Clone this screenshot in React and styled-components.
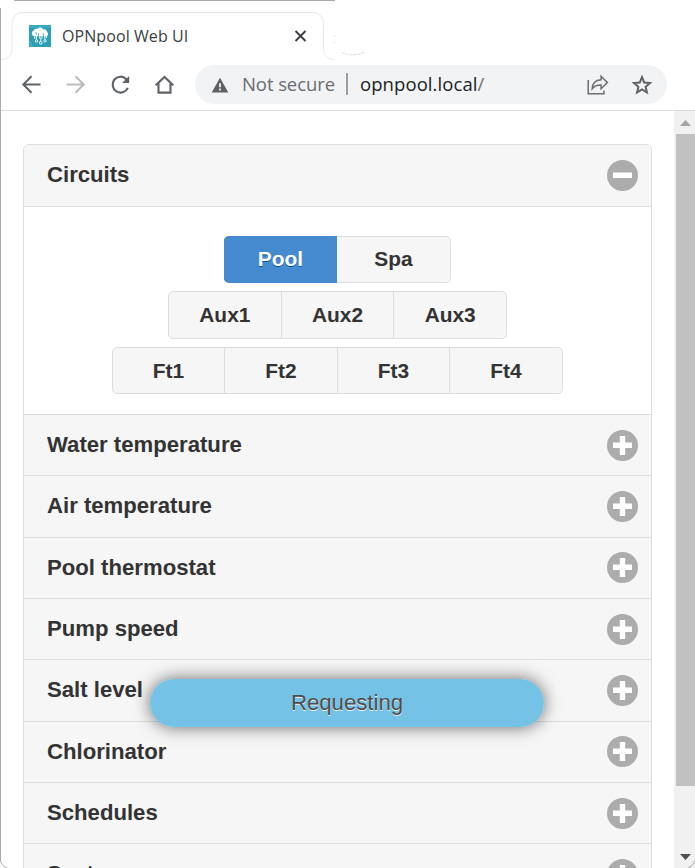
import React from "react";
import styled, { createGlobalStyle } from "styled-components";

const GlobalStyle = createGlobalStyle`
  *, *::before, *::after { box-sizing: border-box; }
  html, body { margin: 0; padding: 0; overflow: hidden; background: #fff; }
`;

const Window = styled.div`
  position: relative;
  width: 695px;
  height: 868px;
  display: flex;
  flex-direction: column;
  overflow: hidden;
  background: #fff;
`;

const WindowEdge = styled.svg`
  position: absolute;
  inset: 0;
  pointer-events: none;
`;

const TabStrip = styled.header`
  height: 61px;
  flex: none;
  display: flex;
  padding: 12px 0 0 12px;
`;

const Tab = styled.div`
  width: 312px;
  height: 48px;
  display: flex;
  align-items: center;
  padding: 0 13px 0 17px;
`;

const TabTitle = styled.span`
  flex: 1;
  margin-left: 11px;
  font: 16px/24px "Open Sans", sans-serif;
  letter-spacing: 0.08px;
  color: #3c4043;
  white-space: nowrap;
`;

const Toolbar = styled.nav`
  height: 50px;
  flex: none;
  display: flex;
  align-items: flex-start;
  padding: 4px 0 0 20px;
  border-bottom: 1px solid #d9dadc;
`;

const NavButtons = styled.div`
  display: flex;
  align-items: center;
  height: 39px;
  width: 175px;
  gap: 20.3px;
`;

const AddressBar = styled.div`
  width: 472px;
  height: 39px;
  border-radius: 20px;
  background: #f1f3f4;
  display: flex;
  align-items: center;
  padding: 0 14px 0 16px;
`;

const AddressText = styled.span`
  font: 18.5px/26px "Open Sans", sans-serif;
  letter-spacing: 0.08px;
  padding-bottom: 1px;
  color: #202124;
  white-space: nowrap;
`;

const SecurityLabel = styled(AddressText)`
  width: 93px;
  margin-left: 13px;
  letter-spacing: -0.08px;
  color: #696c70;
`;

const Slash = styled.span`
  color: #6b6f73;
`;

const Divider = styled.span`
  width: 2px;
  height: 22px;
  margin: 0 12px 2px 11px;
  background: #9b9da0;
`;

const AddressActions = styled.div`
  display: flex;
  align-items: center;
  gap: 21px;
  margin-left: auto;
`;

const Viewport = styled.div`
  flex: 1;
  min-height: 0;
  display: flex;
`;

const Page = styled.main`
  flex: 1;
  padding: 33px 22px 0 23px;
  overflow: hidden;
  font-family: "Liberation Sans", Arial, sans-serif;
`;

const Accordion = styled.div`
  border: 1px solid #ddd;
  border-radius: 6px 6px 0 0;
  overflow: hidden;
`;

const Heading = styled.h4`
  height: ${(p) => (p.$open ? "61px" : "61.333px")};
  margin: 0;
  padding: 0 13px 0 23px;
  display: flex;
  align-items: center;
  justify-content: space-between;
  border-top: ${(p) => (p.$open ? "0" : "1px solid #ddd")};
  background: #f6f6f6;
  color: #333;
  font-size: 22.15px;
  font-weight: 700;
  line-height: 29px;
  text-shadow: 0 1px 0 #f3f3f3;
`;

const HeadingText = styled.span`
  padding-bottom: 1.4px;
`;

const Circuits = styled.section`
  height: 208px;
  border-top: 1px solid #ddd;
  padding-top: 29px;
  display: flex;
  flex-direction: column;
  align-items: center;
  gap: 8px;
`;

const ButtonGroup = styled.div`
  display: flex;
  width: ${(p) => p.$width}px;
  height: ${(p) => p.$height}px;
  border: 1px solid #ddd;
  border-color: ${(p) => (p.$firstActive ? "#ddd #ddd #ddd #458acf" : "#ddd")};
  border-radius: 5px;
  background: #f6f6f6;
`;

const CircuitButton = styled.button`
  flex: ${(p) => p.$share} 1 0;
  min-width: 0;
  margin: ${(p) => (p.$active ? "-1px 0 -1px -1px" : "0")};
  padding: ${(p) => (p.$low ? "1px 0 0" : "0 0 1px")};
  border: 0;
  border-left: ${(p) => (p.$divided ? "1px solid #ddd" : "0")};
  border-radius: ${(p) => (p.$active ? "5px 0 0 5px" : "0")};
  background: ${(p) => (p.$active ? "#458acf" : "transparent")};
  color: ${(p) => (p.$active ? "#fff" : "#333")};
  font: 700 20.9px/26px "Liberation Sans", Arial, sans-serif;
  text-shadow: 0 1px 0 ${(p) => (p.$active ? "#005599" : "#f3f3f3")};
`;

const Toast = styled.div`
  position: absolute;
  left: 150px;
  top: 679px;
  width: 394px;
  height: 48px;
  border-radius: 24px;
  background: rgba(111, 192, 228, 0.97);
  box-shadow: 0 0 17px rgba(0, 0, 0, 0.58);
  color: #4d4d4d;
  font: 22.2px/47px "Liberation Sans", Arial, sans-serif;
  text-align: center;
  text-shadow: 0 1px 0 #eee;
`;

const Scrollbar = styled.div`
  width: 21px;
  display: flex;
  flex-direction: column;
  align-items: flex-end;
  background: #f1f1f1;
`;

const ScrollArrow = styled.svg`
  flex: none;
`;

const ScrollThumb = styled.div`
  width: 19px;
  height: 652px;
  margin-bottom: 59px;
  background: #c1c1c1;
`;

const Icon = styled.svg`
  flex: none;
  display: block;
`;

function ToggleIcon({ open }) {
  return (
    <Icon width="31" height="31" viewBox="0 0 31 31">
      <circle cx="15.5" cy="15.5" r="15.5" fill="#acacac" />
      <path d={open ? "M6 12.500h19v5.500H6z" : "M6 12.500h6.800V6h5.400v6.500H25V18h-6.800v7h-5.400v-7H6z"} fill="#fff" />
    </Icon>
  );
}

function Favicon() {
  return (
    <Icon width="22" height="22" viewBox="0 0 22 22">
      <path fill="#2d9fb5" d="M0 0h22v22H0z" />
      <path fill="#46b3c4" d="M0 0h22v3H0zM0 16h3v6H0z" opacity=".55" />
      <path fill="#fff" d="M5 11.2a3 3 0 0 1-.3-5.7A2.7 2.7 0 0 1 8 3.9a3.8 3.8 0 0 1 6.4.5 2.8 2.8 0 0 1 3.6 2.7 2.2 2.2 0 0 1-.9 4.1z" />
      <path d="M7.5 9.5v5.4M10.8 8.5v5.2M12.9 8.5v5.2M15.8 9.5v4.8M5.8 11v3M17.4 11v2" stroke="#fff" strokeWidth=".9" />
      <path d="M9.5 8v5M14.2 8v4M7.2 7v3" stroke="#46b3c4" strokeWidth=".8" />
      <g fill="none" stroke="#fff" strokeWidth=".9">
        <circle cx="7.5" cy="16" r="1.2" />
        <circle cx="11.8" cy="17.8" r="1.4" />
        <circle cx="16" cy="15.8" r="1.2" />
        <path d="M11.8 12.8v3.4" />
      </g>
    </Icon>
  );
}

const rows = [
  { width: 227, height: 47, buttons: ["Pool", "Spa"], shares: [1, 1] },
  { width: 339, height: 48, buttons: ["Aux1", "Aux2", "Aux3"], shares: [1, 1, 1] },
  { width: 451, height: 47, buttons: ["Ft1", "Ft2", "Ft3", "Ft4"], shares: [111, 112, 111, 112] },
];

const sections = [
  "Water temperature", "Air temperature", "Pool thermostat", "Pump speed",
  "Salt level", "Chlorinator", "Schedules", "System",
];

export default function App() {
  return (
    <>
      <GlobalStyle />
      <Window>
        <TabStrip>
          <Tab>
            <Favicon />
            <TabTitle>OPNpool Web UI</TabTitle>
            <Icon width="20" height="20" viewBox="0 0 20 20" fill="none" stroke="#3c4043" strokeWidth="2">
              <path d="m4.500 5 10 10M14.500 5l-10 10" />
            </Icon>
          </Tab>
        </TabStrip>
        <Toolbar>
          <NavButtons>
            <Icon width="24" height="24" viewBox="0 0 24 24" fill="none" stroke="#5f6368" strokeWidth="2">
              <path d="M20.500 11.500H3.500M11.500 3.300l-8.200 8.200 8.200 8.200" />
            </Icon>
            <Icon width="24" height="24" viewBox="0 0 24 24" fill="none" stroke="#babcbe" strokeWidth="2">
              <path d="M2.500 11.500h17M11.500 3.300l8.200 8.200-8.200 8.200" />
            </Icon>
            <Icon width="24" height="24" viewBox="0.400 0 24.500 24.500" fill="none" stroke="#5f6368" strokeWidth="2.2">
              <path d="M19.600 15.200a8.100 8.100 0 1 1-1.700-9.100l1.500 1.600" />
              <path d="M21 3v7.300h-7.300z" fill="#5f6368" stroke="none" />
            </Icon>
            <Icon width="24" height="24" viewBox="0.500 0.300 24 24" fill="none" stroke="#5f6368" strokeWidth="2.1">
              <path d="M3.200 12.600 12 4.300l8.800 8.300M6 10.500v9.400h12v-9.400" />
            </Icon>
          </NavButtons>
          <AddressBar>
            <Icon width="18" height="18" viewBox="0 0 18 18">
              <path fill="#5f6368" d="M9 1.700 17.300 16.400H.7z" />
              <path fill="#f1f3f4" d="M8.100 7.200h1.800v4H8.100zM8.100 12.600h1.800v1.800H8.100z" />
            </Icon>
            <SecurityLabel>Not secure</SecurityLabel>
            <Divider />
            <AddressText>opnpool.local<Slash>/</Slash></AddressText>
            <AddressActions>
              <Icon width="24" height="24" viewBox="0.500 0.500 24 24" fill="none" stroke="#6b6f73" strokeWidth="1.5">
                <path d="M2.700 7.500v13.800h15.700v-3.400" />
                <path d="M6.700 16.300c.2-5.700 3.200-8.700 8.900-9V3.800l6.300 6.300-6.300 6.200v-3.800c-4.300-.1-6.800.9-8.900 3.800z" />
              </Icon>
              <Icon width="22" height="22" viewBox="0 0 22 22" fill="none" stroke="#5f6368" strokeWidth="2">
                <path d="m11 3.200 2.200 5.300 5.800.5-4.400 3.800 1.300 5.700-4.900-3-4.900 3 1.300-5.700L3 9l5.800-.5z" />
              </Icon>
            </AddressActions>
          </AddressBar>
        </Toolbar>
        <Viewport>
          <Page>
            <Accordion>
              <Heading $open><HeadingText>Circuits</HeadingText><ToggleIcon open /></Heading>
              <Circuits>
                {rows.map((row, r) => (
                  <ButtonGroup key={r} $width={row.width} $height={row.height} $firstActive={r === 0}>
                    {row.buttons.map((name, i) => (
                      <CircuitButton
                        key={name}
                        $active={name === "Pool"}
                        $divided={r > 0 && i > 0}
                        $share={row.shares[i]}
                        $low={r === 2}
                      >
                        {name}
                      </CircuitButton>
                    ))}
                  </ButtonGroup>
                ))}
              </Circuits>
              {sections.map((name) => (
                <Heading key={name}><HeadingText>{name}</HeadingText><ToggleIcon /></Heading>
              ))}
            </Accordion>
          </Page>
          <Scrollbar>
            <ScrollArrow width="21" height="23" viewBox="0 0 21 23"><path d="m6 15 5.500-6 5.500 6z" fill="#a3a3a3" /></ScrollArrow>
            <ScrollThumb />
            <ScrollArrow width="21" height="23" viewBox="0 0 21 23"><path d="m6 9 5.500 6L17 9z" fill="#505050" /></ScrollArrow>
          </Scrollbar>
        </Viewport>
        <Toast>Requesting</Toast>
        <WindowEdge width="695" height="868" viewBox="0 0 695 868" fill="none">
          <path d="M14 .5h321M.5 8v852q0 5 7 8M695 860.5q-1.500 5-7 7.500" stroke="#ababab" />
          <path d="M1 59.500q11 0 11-11V24.500q0-12 12-12h288q11.500 0 11.500 12v24q0 11 11 11" stroke="#e8e9ec" />
          <path d="M334.500 35v1.500M334.500 42v1M342 52.500q11 5 23-.5" stroke="#dadce2" strokeDasharray="3 1" />
        </WindowEdge>
      </Window>
    </>
  );
}
